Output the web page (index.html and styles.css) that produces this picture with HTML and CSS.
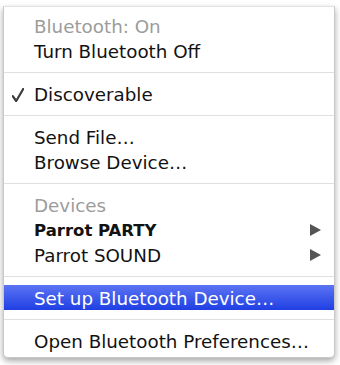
FILE: index.html
```html
<!DOCTYPE html>
<html>
<head>
<meta charset="utf-8">
<link rel="stylesheet" href="styles.css">
</head>
<body>
<div class="menu">
  <div class="item disabled"><span class="gutter"></span><span class="label">Bluetooth: On</span></div>
  <div class="item"><span class="gutter"></span><span class="label">Turn Bluetooth Off</span></div>
  <div class="sep"></div>
  <div class="item"><span class="gutter"><svg class="check" width="12" height="14" viewBox="0 0 12 14"><path d="M0.8 8.2 L4.2 13 L11.2 1" fill="none" stroke="#3c3c3c" stroke-width="2.2" stroke-linecap="round" stroke-linejoin="round"/></svg></span><span class="label">Discoverable</span></div>
  <div class="sep"></div>
  <div class="item"><span class="gutter"></span><span class="label">Send File…</span></div>
  <div class="item"><span class="gutter"></span><span class="label">Browse Device…</span></div>
  <div class="sep"></div>
  <div class="item disabled"><span class="gutter"></span><span class="label">Devices</span></div>
  <div class="item bold"><span class="gutter"></span><span class="label">Parrot PARTY</span><span class="arrow"></span></div>
  <div class="item"><span class="gutter"></span><span class="label">Parrot SOUND</span><span class="arrow"></span></div>
  <div class="sep"></div>
  <div class="item selected"><span class="gutter"></span><span class="label">Set up Bluetooth Device…</span></div>
  <div class="sep"></div>
  <div class="item"><span class="gutter"></span><span class="label">Open Bluetooth Preferences…</span></div>
</div>
</body>
</html>
```

FILE: styles.css
```css
html, body {
  margin: 0;
  padding: 0;
  background: #ffffff;
}

body {
  width: 340px;
  height: 365px;
  overflow: hidden;
  font-family: "DejaVu Sans", "Liberation Sans", sans-serif;
  font-size: 18.3px;
  color: #121212;
}

.menu {
  box-sizing: border-box;
  width: 332px;
  height: 352px;
  margin: 6px 0 0 3px;
  padding: 6px 0 4px;
  background: #ffffff;
  border: 1px solid #c9c9c9;
  border-top-color: #e2e2e2;
  border-radius: 0 0 5px 5px;
  box-shadow: 0 3px 6px rgba(0, 0, 0, 0.35);
}

.item {
  display: grid;
  grid-template-columns: 30px 1fr auto;
  align-items: center;
  height: 25px;
  line-height: 25px;
  padding-right: 13px;
  white-space: nowrap;
}

.gutter {
  display: flex;
  align-items: center;
  height: 25px;
  padding-left: 8px;
}

.check {
  display: block;
  margin-top: 1px;
}

.label {
  padding-top: 1px;
}

.disabled {
  color: #9c9c9c;
}

.bold .label {
  font-weight: bold;
  font-size: 16.5px;
}

.arrow {
  width: 0;
  height: 0;
  border-left: 11px solid #555555;
  border-top: 6.5px solid transparent;
  border-bottom: 6.5px solid transparent;
}

.selected {
  background: linear-gradient(#5c74f3, #1f3fe3);
  color: #ffffff;
}

.sep {
  height: 1px;
  margin: 9px 0 8px;
  background: #e0e0e0;
}
```
